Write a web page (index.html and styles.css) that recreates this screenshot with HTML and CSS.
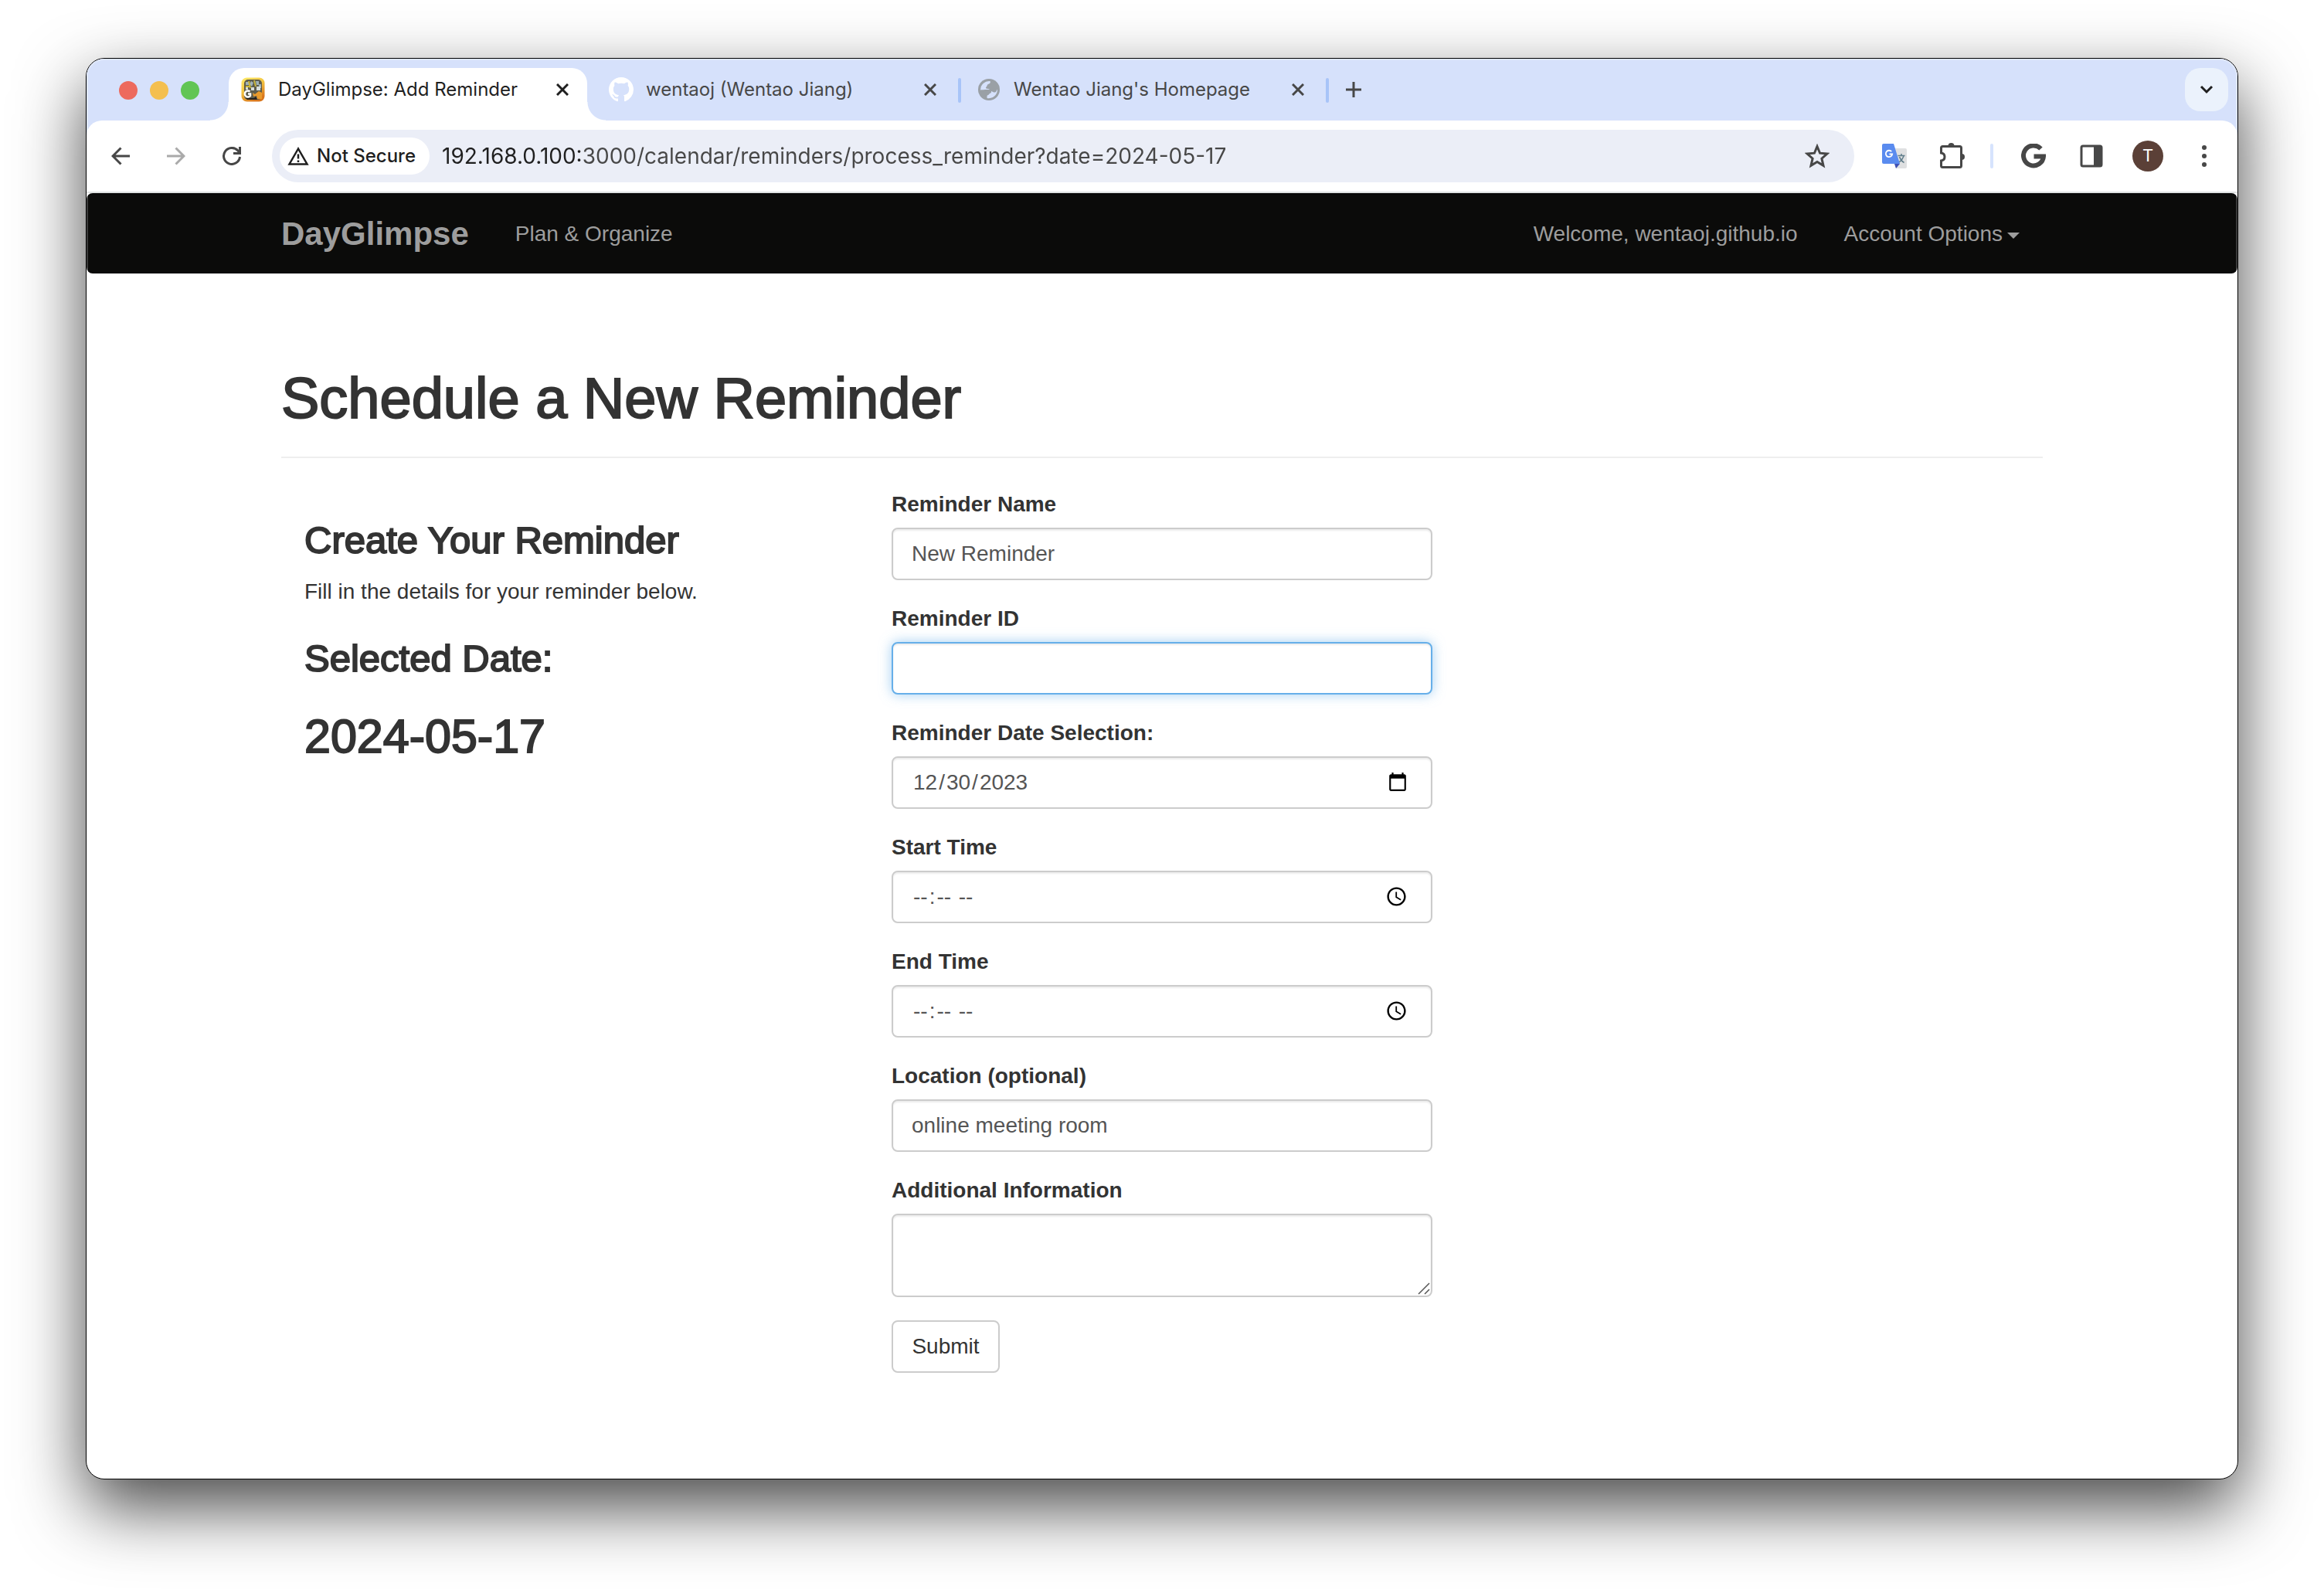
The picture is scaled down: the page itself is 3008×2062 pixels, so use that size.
FILE: index.html
```html
<!DOCTYPE html>
<html lang="en">
<head>
<meta charset="utf-8">
<title>DayGlimpse: Add Reminder</title>
<link rel="stylesheet" href="styles.css">
</head>
<body>
<div class="window">
  <header class="chrome">
    <div class="tab-strip">
      <div class="lights">
        <button class="light light-close" aria-label="Close window"></button>
        <button class="light light-min" aria-label="Minimize window"></button>
        <button class="light light-max" aria-label="Zoom window"></button>
      </div>
      <div class="tab tab-active">
        <svg class="favicon" viewBox="0 0 32 32" aria-hidden="true">
          <defs><linearGradient id="fav" x1="0" y1="0" x2="0.5" y2="1"><stop offset="0" stop-color="#ffee6a"/><stop offset="0.5" stop-color="#f2c340"/><stop offset="1" stop-color="#d8761c"/></linearGradient></defs>
          <rect x="0.5" y="0.5" width="30" height="31" rx="7" fill="url(#fav)"/>
          <rect x="4" y="3" width="23" height="26" rx="5" fill="#5d5c4c"/>
          <path d="M6 6h4v4H6zM13 5l3 2-2 5-3-3zM19 5h4v5h-3zM23 9h3v5h-3z" fill="#9fb2b8"/>
          <path d="M10 5l2 9M17 4l2 8M6 12h6" stroke="#c9b73e" stroke-width="2"/>
          <path d="M13 13h4v4h-4zM20 12h5v5h-5zM6 13h3v3H6z" fill="#d7dedb"/>
          <path d="M11.500 18.500a4 4 0 1 0 .5 5.500v-2.500H9" fill="none" stroke="#fff" stroke-width="2.500"/>
          <path d="M15 20l3 2 5-4 4 2v8h-6l-1-4-4 1z" fill="#e99a2b"/>
          <path d="M6 27h11l2-2 2 4H8z" fill="#26211c"/>
        </svg>
        <a class="tab-title" href="#">DayGlimpse: Add Reminder</a>
        <button class="icon-button" aria-label="Close tab"><svg width="16" height="16" viewBox="0 0 16 16"><path d="M1 1l14 14M15 1L1 15" stroke="currentColor" stroke-width="3"/></svg></button>
      </div>
      <span class="tab-divider tab-divider-hidden"></span>
      <div class="tab">
        <svg class="favicon" viewBox="0 0 16 16" aria-hidden="true"><path fill="#fff" d="M8 0C3.580 0 0 3.580 0 8c0 3.540 2.290 6.530 5.470 7.590.4.070.55-.17.55-.38 0-.19-.01-.82-.01-1.490-2.010.37-2.530-.49-2.690-.94-.09-.23-.48-.94-.82-1.130-.28-.15-.68-.52-.01-.53.63-.01 1.080.58 1.230.82.72 1.210 1.870.87 2.330.66.070-.52.280-.87.510-1.070-1.780-.2-3.640-.89-3.640-3.950 0-.87.31-1.590.82-2.150-.08-.2-.36-1.020.080-2.120 0 0 .67-.21 2.200.82.640-.18 1.320-.27 2-.27s1.360.090 2 .27c1.530-1.040 2.200-.82 2.200-.82.440 1.100.160 1.920.080 2.120.510.560.820 1.270.820 2.150 0 3.070-1.870 3.750-3.650 3.950.290.250.540.730.540 1.480 0 1.070-.01 1.930-.01 2.200 0 .210.150.460.550.380A8.010 8.010 0 0 0 16 8c0-4.420-3.580-8-8-8z"/></svg>
        <a class="tab-title" href="#">wentaoj (Wentao Jiang)</a>
        <button class="icon-button" aria-label="Close tab"><svg width="16" height="16" viewBox="0 0 16 16"><path d="M1 1l14 14M15 1L1 15" stroke="currentColor" stroke-width="3"/></svg></button>
      </div>
      <span class="tab-divider"></span>
      <div class="tab">
        <svg class="favicon" viewBox="0 0 32 32" aria-hidden="true">
          <circle cx="16" cy="16" r="14" fill="#9aa0a6"/>
          <path d="M5 16.500A11.300 11.300 0 0 1 17.500 5c1 2-.5 3.500-2.500 4-1.500.5-1 2-2 3s-1.500 2-.5 2.500 3.500 0 4.500 1.500H12c-2 0-3.500.5-7 .5z" fill="#d6e1fb"/>
          <path d="M27 15.500A11.300 11.300 0 0 1 13.500 27v-2.500c0-1.500 2.500-1.500 3-3 .5-1 2.500-.5 2.500-2.500v-1c2 .5 3 2 5 1.500 1.500-.5 1.500-2 3-4z" fill="#d6e1fb"/>
        </svg>
        <a class="tab-title" href="#">Wentao Jiang's Homepage</a>
        <button class="icon-button" aria-label="Close tab"><svg width="16" height="16" viewBox="0 0 16 16"><path d="M1 1l14 14M15 1L1 15" stroke="currentColor" stroke-width="3"/></svg></button>
      </div>
      <span class="tab-divider"></span>
      <button class="icon-button new-tab" aria-label="New tab"><svg width="20" height="20" viewBox="0 0 20 20"><path d="M10 0v20M0 10h20" stroke="currentColor" stroke-width="3"/></svg></button>
      <button class="tab-search" aria-label="Search tabs"><svg width="18" height="12" viewBox="0 0 18 12"><path d="M2 2l7 7 7-7" fill="none" stroke="currentColor" stroke-width="3"/></svg></button>
    </div>

    <div class="toolbar">
      <div class="nav-buttons">
        <button class="icon-button" aria-label="Back"><svg width="24" height="24" viewBox="0 0 24 24"><path d="M24 12H2M12.500 1.500L2 12l10.500 10.500" fill="none" stroke="currentColor" stroke-width="3"/></svg></button>
        <button class="icon-button icon-faint" aria-label="Forward"><svg width="24" height="24" viewBox="0 0 24 24"><path d="M0 12h22M11.500 1.500L22 12 11.500 22.500" fill="none" stroke="currentColor" stroke-width="3"/></svg></button>
        <button class="icon-button" aria-label="Reload"><svg width="24" height="24" viewBox="0 0 24 24"><path d="M22.500 13a10.500 10.500 0 1 1-2.600-8L23 8.500M22.500 0v8.500h-8.500" fill="none" stroke="currentColor" stroke-width="3"/></svg></button>
      </div>
      <div class="address">
        <button class="security">
          <svg width="28" height="24" viewBox="0 0 28 24" aria-hidden="true"><path d="M14 2.500L2.500 22.500h23z" fill="none" stroke="currentColor" stroke-width="2.500"/><path d="M14 9.500v6M14 17.500v2.500" stroke="currentColor" stroke-width="2.500"/></svg>
          Not Secure
        </button>
        <input class="url" type="text" aria-label="Address" value="192.168.0.100:3000/calendar/reminders/process_reminder?date=2024-05-17">
        <button class="icon-button" aria-label="Bookmark"><svg width="32" height="32" viewBox="0 0 32 32"><path d="M16 3.500l3.600 8.700 9.400.8-7.100 6.200 2.100 9.200-8-4.900-8 4.900 2.100-9.200L3 13l9.400-.8z" fill="none" stroke="currentColor" stroke-width="3"/></svg></button>
      </div>
      <div class="extensions">
        <button class="icon-button" aria-label="Translate"><svg width="32" height="32" viewBox="0 0 32 32"><path d="M13 6h17a2 2 0 0 1 2 2v22a2 2 0 0 1-2 2H18z" fill="#dfe0e1"/><path d="M20.500 15.500h9M25 13v2.500M28 15.500c-1 4-4 7-6 8.500M22.500 17c1 3 3.500 6 6 7.500" fill="none" stroke="#607d8b" stroke-width="1.500"/><path d="M16 26h7l-5 6z" fill="#3f51b5"/><path d="M2 0h13l8 26H2a2 2 0 0 1-2-2V2a2 2 0 0 1 2-2z" fill="#5a8bef"/><path d="M12.200 10.200a4.200 4.200 0 1 0 1 3.300H9.500" fill="none" stroke="#fff" stroke-width="1.800"/></svg></button>
        <button class="icon-button" aria-label="Extensions"><svg width="36" height="36" viewBox="0 0 36 36"><path d="M4.500 7.500a2 2 0 0 1 2-2h22a2 2 0 0 1 2 2v23a2 2 0 0 1-2 2h-22a2 2 0 0 1-2-2v-6.500c3.500-.5 4.500-2.500 4.500-5s-1-4.500-4.500-5z" fill="none" stroke="currentColor" stroke-width="3"/><path d="M13.500 5a4 4 0 0 1 8 0zM31 15a4 4 0 0 1 0 8z" fill="currentColor"/></svg></button>
        <span class="toolbar-divider"></span>
        <button class="icon-button" aria-label="Google"><svg width="32" height="32" viewBox="0 0 32 32"><path d="M25.500 6.500A13 13 0 1 0 29 16.500H16.500" fill="none" stroke="currentColor" stroke-width="6"/></svg></button>
        <button class="icon-button" aria-label="Side panel"><svg width="30" height="30" viewBox="0 0 30 30"><rect x="2" y="2" width="26" height="26" rx="2" fill="none" stroke="currentColor" stroke-width="3"/><path d="M18 2h10v26H18z" fill="currentColor"/></svg></button>
        <button class="avatar" aria-label="Profile">T</button>
        <button class="icon-button" aria-label="Menu"><svg width="6" height="28" viewBox="0 0 6 28"><circle cx="3" cy="3" r="3" fill="currentColor"/><circle cx="3" cy="14" r="3" fill="currentColor"/><circle cx="3" cy="25" r="3" fill="currentColor"/></svg></button>
      </div>
    </div>
  </header>

  <nav class="navbar">
    <div class="container navbar-inner">
      <a class="brand" href="#">DayGlimpse</a>
      <a class="nav-link" href="#">Plan &amp; Organize</a>
      <a class="nav-link nav-right" href="#">Welcome, wentaoj.github.io</a>
      <a class="nav-link nav-account" href="#">Account Options<span class="caret"></span></a>
    </div>
  </nav>

  <main class="container page">
    <h1>Schedule a New Reminder</h1>
    <hr>
    <div class="columns">
      <section class="intro">
        <h3>Create Your Reminder</h3>
        <p>Fill in the details for your reminder below.</p>
        <h3>Selected Date:</h3>
        <h2>2024-05-17</h2>
      </section>
      <form class="reminder-form">
        <div class="field">
          <label for="name">Reminder Name</label>
          <input class="control" id="name" type="text" value="New Reminder">
        </div>
        <div class="field">
          <label for="rid">Reminder ID</label>
          <input class="control control-focused" id="rid" type="text">
        </div>
        <div class="field">
          <label for="date">Reminder Date Selection:</label>
          <input class="control control-picker" id="date" type="date" value="2023-12-30">
        </div>
        <div class="field">
          <label for="start">Start Time</label>
          <input class="control control-picker" id="start" type="time">
        </div>
        <div class="field">
          <label for="end">End Time</label>
          <input class="control control-picker" id="end" type="time">
        </div>
        <div class="field">
          <label for="location">Location (optional)</label>
          <input class="control" id="location" type="text" value="online meeting room">
        </div>
        <div class="field">
          <label for="info">Additional Information</label>
          <div class="area">
            <textarea class="control control-area" id="info" rows="2"></textarea>
            <svg class="grip" width="16" height="16" viewBox="0 0 16 16" aria-hidden="true"><path d="M1 15L15 1M9 15l6-6" stroke="#555" stroke-width="1.500"/></svg>
          </div>
        </div>
        <button class="submit" type="button">Submit</button>
      </form>
    </div>
  </main>
</div>
</body>
</html>
```
FILE: styles.css
```css
* { box-sizing: border-box; }

body {
  margin: 0;
  padding: 75px 111px 147px;
  background: #fff;
  color: #333;
  font: 28px/40px "Liberation Sans", Arial, sans-serif;
}

button, input, textarea { font: inherit; color: inherit; margin: 0; }
button { border: 0; padding: 0; background: none; }
a { color: inherit; text-decoration: none; }
svg { display: block; flex: none; }

.window {
  position: relative;
  border: 1px solid #000;
  border-radius: 24px;
  overflow: hidden;
  background: #fff;
  box-shadow: 0 36px 88px rgba(0, 0, 0, 0.72);
}

/* Faint inner highlight along the window edge */
.window::after {
  content: "";
  position: absolute;
  inset: 0;
  border-radius: 23px;
  box-shadow: inset 0 0 0 2px rgba(255, 255, 255, 0.2);
  pointer-events: none;
}

/* Browser chrome */
.chrome {
  background: #d6e1fb;
  color: #474747;
  font: 24px/32px Inter, Roboto, sans-serif;
}

.tab-strip {
  display: flex;
  align-items: center;
  height: 80px;
  padding: 12px 12px 0 42px;
}

.lights { display: flex; gap: 16px; width: 142px; margin-bottom: 10px; }
.light { width: 24px; height: 24px; border-radius: 50%; }
.light-close { background: #ed6a5e; }
.light-min { background: #f4bf4f; }
.light-max { background: #61c554; }

.tab {
  position: relative;
  display: flex;
  align-items: center;
  gap: 16px;
  width: 464px;
  height: 68px;
  padding: 0 24px 12px 16px;
}
.tab-active { background: #fff; border-radius: 20px 20px 0 0; color: #1f1f1f; }
.tab-active::before,
.tab-active::after {
  content: "";
  position: absolute;
  bottom: 0;
  width: 24px;
  height: 24px;
}
.tab-active::before { right: 100%; background: radial-gradient(circle at 0 0, transparent 23px, #fff 24px); }
.tab-active::after { left: 100%; background: radial-gradient(circle at 100% 0, transparent 23px, #fff 24px); }
.favicon { width: 32px; height: 32px; }
.tab-title { flex: 1; white-space: nowrap; }
.icon-button { display: flex; flex: none; align-items: center; justify-content: center; }
.icon-faint { color: #aaa; }

.tab-divider { width: 4px; height: 32px; margin: 0 4px 10px; border-radius: 2px; background: #a8c4f8; }
.tab-divider-hidden { background: none; }
.new-tab { margin: 0 auto 12px 18px; }
.tab-search {
  display: flex;
  align-items: center;
  justify-content: center;
  width: 56px;
  height: 56px;
  margin-bottom: 12px;
  border-radius: 20px;
  background: #ebf2fc;
  color: #1f1f1f;
}

.toolbar {
  display: flex;
  align-items: center;
  height: 94px;
  padding: 12px 40px 12px 32px;
  border-bottom: 2px solid #dfe2e2;
  border-radius: 20px 20px 0 0;
  background: #fff;
}
.nav-buttons { display: flex; width: 208px; gap: 48px; }

.address {
  display: flex;
  flex: 1;
  align-items: center;
  height: 68px;
  padding: 0 32px 0 10px;
  border-radius: 34px;
  background: #ebeef7;
}
.security {
  display: flex;
  align-items: center;
  gap: 10px;
  height: 48px;
  padding: 0 18px 0 10px;
  border-radius: 24px;
  background: #fff;
  color: #1f1f1f;
  font-weight: 500;
}
/* The host part of the address is darker than the path */
.url {
  flex: 1;
  height: 40px;
  margin-left: 16px;
  padding: 0;
  border: 0;
  outline: 0;
  background: linear-gradient(90deg, #1f1f1f 181px, #474747 181px);
  background-clip: text;
  -webkit-text-fill-color: transparent;
  font-size: 28px;
}

.extensions { display: flex; align-items: center; padding-left: 36px; }
.extensions > :nth-child(2) { margin-left: 40px; }
.toolbar-divider { width: 4px; height: 32px; margin: 0 36px 0 32px; border-radius: 2px; background: #d6e3fd; }
.avatar {
  width: 40px;
  height: 40px;
  margin: 0 50px 0 38px;
  border-radius: 50%;
  background: #5b4037;
  color: #fff;
  font: 22px/40px Roboto, sans-serif;
}
.extensions > :nth-child(5) { margin-left: 44px; }

/* Site navigation */
.container { width: 100%; max-width: 2340px; margin: 0 auto; padding: 0 30px; }

.navbar {
  border: 2px solid #080808;
  border-radius: 8px;
  background: #0b0b0a;
  color: #9d9d9d;
}
.navbar-inner { display: flex; align-items: center; height: 100px; padding-top: 2px; }
.brand { font-size: 42px; font-weight: 700; }
.nav-link { margin-left: 60px; }
.nav-right { margin-left: auto; }
.nav-account { display: flex; align-items: center; margin-right: 30px; }
.caret {
  margin: 4px 0 0 6px;
  border: 8px solid transparent;
  border-top-color: currentColor;
  border-bottom: 0;
}

/* Page content */
.page { padding-top: 122px; padding-bottom: 137px; }

h1, h2, h3, p { margin: 0; }
h1, h2, h3 { font-weight: 400; -webkit-text-stroke: 2px currentColor; }
h1 { font-size: 74px; line-height: 80px; }
h2 { font-size: 61px; line-height: 68px; }
h3 { font-size: 49px; line-height: 53px; }
hr { height: 2px; margin: 35px 0 40px; border: 0; background: #eee; }

.columns { display: grid; grid-template-columns: repeat(3, 1fr); }
.intro { display: flex; flex-direction: column; gap: 40px; padding: 40px 30px 0; }
.intro p { margin-top: -20px; }

.reminder-form { display: flex; flex-direction: column; align-items: flex-start; gap: 30px; padding: 0 30px; }
.field { display: flex; flex-direction: column; gap: 10px; width: 100%; }
.field label { font-weight: 700; }

.control {
  display: block;
  width: 100%;
  height: 68px;
  padding: 12px 24px;
  border: 2px solid #ccc;
  border-radius: 8px;
  outline: 0;
  background: #fff;
  box-shadow: inset 0 2px 2px rgba(0, 0, 0, 0.075);
  color: #555;
}
.control-focused {
  border-color: #66afe9;
  box-shadow: inset 0 2px 2px rgba(0, 0, 0, 0.075), 0 0 16px rgba(102, 175, 233, 0.6);
}
.control-picker { padding-right: 27px; }
.control-picker::-webkit-datetime-edit-month-field,
.control-picker::-webkit-datetime-edit-day-field,
.control-picker::-webkit-datetime-edit-year-field,
.control-picker::-webkit-datetime-edit-hour-field,
.control-picker::-webkit-datetime-edit-minute-field,
.control-picker::-webkit-datetime-edit-ampm-field { padding: 0 2px; }
.area { position: relative; }
.control-area { height: 108px; resize: none; }
.grip { position: absolute; right: 3px; bottom: 3px; }

.submit {
  min-width: 140px;
  height: 68px;
  padding: 0 24px;
  border: 2px solid #ccc;
  border-radius: 8px;
  background: #fff;
}
```
